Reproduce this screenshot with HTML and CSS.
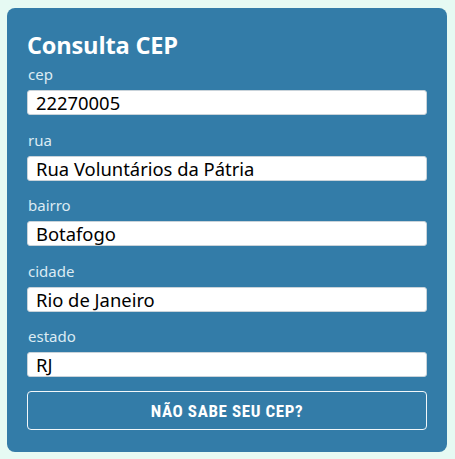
FILE: index.html
```html
<!DOCTYPE html>
<html lang="pt-BR">
<head>
<meta charset="utf-8">
<title>Consulta CEP</title>
<link rel="stylesheet" href="styles.css">
</head>
<body>
<form class="card">
  <h1 class="title">Consulta CEP</h1>
  <div class="fields">
    <label class="field"><span class="label">cep</span><input class="input" type="text" value="22270005"></label>
    <label class="field"><span class="label">rua</span><input class="input" type="text" value="Rua Voluntários da Pátria"></label>
    <label class="field"><span class="label">bairro</span><input class="input" type="text" value="Botafogo"></label>
    <label class="field"><span class="label">cidade</span><input class="input" type="text" value="Rio de Janeiro"></label>
    <label class="field"><span class="label">estado</span><input class="input" type="text" value="RJ"></label>
  </div>
  <button class="help" type="button">NÃO SABE SEU CEP?</button>
</form>
</body>
</html>
```
FILE: styles.css
```css
html, body {
  margin: 0;
  padding: 0;
}
body {
  background: #e6faf3;
  padding: 8px 8px 7px 7px;
  font-family: "Noto Sans", "Open Sans", sans-serif;
}
.card {
  box-sizing: border-box;
  width: 440px;
  height: 444px;
  background: #337ca8;
  border-radius: 8px;
  padding: 22px 20px 21px 20px;
  display: flex;
  flex-direction: column;
}
.title {
  margin: 0;
  font-family: "Open Sans", sans-serif;
  font-weight: 700;
  font-size: 23.6px;
  line-height: 31px;
  color: #ffffff;
  letter-spacing: -0.2px;
}
.fields {
  display: flex;
  flex-direction: column;
  gap: 14.5px;
  margin-top: 3px;
}
.field {
  display: flex;
  flex-direction: column;
}
.label {
  font-family: "Noto Sans", sans-serif;
  font-size: 15px;
  line-height: 20px;
  color: #dcebf3;
  padding-left: 1px;
  margin-bottom: 6px;
}
.input {
  box-sizing: border-box;
  width: 400px;
  height: 25px;
  margin: 0;
  padding: 0 8px;
  border: 1px solid #c9d3da;
  border-radius: 3px;
  background: #fff;
  font-family: "Noto Sans", sans-serif;
  font-size: 18.4px;
  color: #000;
  outline: none;
}
.help {
  margin-top: 14px;
  box-sizing: border-box;
  width: 400px;
  height: 39px;
  background: transparent;
  border: 1px solid #f2f7fa;
  border-radius: 4px;
  color: #ffffff;
  font-family: "Liberation Sans Narrow", "Roboto Condensed", Roboto, sans-serif;
  font-weight: 700;
  font-size: 17px;
  letter-spacing: 0.6px;
  cursor: pointer;
}
```
